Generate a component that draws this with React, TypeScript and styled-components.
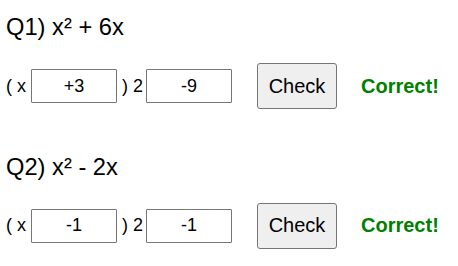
import React from "react";
import styled, { createGlobalStyle } from "styled-components";

const Global = createGlobalStyle`
  html, body { margin: 0; padding: 0; background: #ffffff; }
  body { font-family: "Liberation Sans", Arial, sans-serif; color: #000000; }
`;

const Page = styled.div`
  display: flex;
  flex-direction: column;
  gap: 43.5px;
  padding: 13px 6px 0 6px;
`;

const Question = styled.section`
  display: flex;
  flex-direction: column;
  gap: 22px;
`;

const Heading = styled.h2`
  margin: 0;
  font-size: 23.7px;
  line-height: 28px;
  font-weight: normal;
`;

const Row = styled.div`
  display: flex;
  align-items: center;
  gap: 5px;
  height: 46px;
  font-size: 18px;
`;

const Label = styled.span<{ $tight?: boolean }>`
  white-space: pre;
  font-size: 18px;
  margin-right: ${(p) => (p.$tight ? "-2px" : "0")};
`;

const Field = styled.input`
  box-sizing: border-box;
  width: 86px;
  height: 34px;
  padding: 0;
  border: 1px solid #767676;
  border-radius: 1px;
  background: #ffffff;
  font-family: "Liberation Sans", Arial, sans-serif;
  font-size: 18px;
  color: #000000;
  text-align: center;
  outline: none;
`;

const CheckButton = styled.button`
  box-sizing: border-box;
  width: 80px;
  height: 46px;
  margin-left: 20px;
  padding: 0 10px;
  border: 1px solid #767676;
  border-radius: 3px;
  background: #efefef;
  font-family: "Liberation Sans", Arial, sans-serif;
  font-size: 20px;
  color: #000000;
`;

const Result = styled.span<{ $ok: boolean }>`
  margin-left: 19px;
  font-size: 20px;
  font-weight: bold;
  color: ${(p) => (p.$ok ? "#008000" : "#cc0000")};
`;

const questions = [
  { title: "Q1) x² + 6x", a: "+3", b: "-9" },
  { title: "Q2) x² - 2x", a: "-1", b: "-1" },
];

export default function App() {
  return (
    <>
      <Global />
      <Page>
        {questions.map((q) => (
          <Question key={q.title}>
            <Heading>{q.title}</Heading>
            <Row>
              <Label>( x</Label>
              <Field defaultValue={q.a} />
              <Label $tight>) 2</Label>
              <Field defaultValue={q.b} />
              <CheckButton>Check</CheckButton>
              <Result $ok>Correct!</Result>
            </Row>
          </Question>
        ))}
      </Page>
    </>
  );
}
